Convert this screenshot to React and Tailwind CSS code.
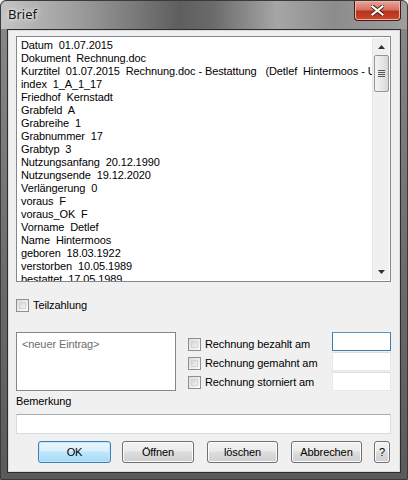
import React from 'react';

const rows = [
  ['Datum', '01.07.2015'],
  ['Dokument', 'Rechnung.doc'],
  ['Kurztitel', '01.07.2015  Rechnung.doc - Bestattung   (Detlef  Hintermoos - Urnengrab)'],
  ['index', '1_A_1_17'],
  ['Friedhof', 'Kernstadt'],
  ['Grabfeld', 'A'],
  ['Grabreihe', '1'],
  ['Grabnummer', '17'],
  ['Grabtyp', '3'],
  ['Nutzungsanfang', '20.12.1990'],
  ['Nutzungsende', '19.12.2020'],
  ['Verlängerung', '0'],
  ['voraus', 'F'],
  ['voraus_OK', 'F'],
  ['Vorname', 'Detlef'],
  ['Name', 'Hintermoos'],
  ['geboren', '18.03.1922'],
  ['verstorben', '10.05.1989'],
  ['bestattet', '17.05.1989'],
];

const Check = () => (
  <span className="w-[13px] h-[13px] border border-[#8f8f8f] bg-[linear-gradient(135deg,#dcdcdc,#fbfbfb)] p-[2px] shrink-0">
    <span className="block w-full h-full border border-[#d4d4d4] bg-[linear-gradient(135deg,#d6d6d6,#f4f4f4)]" />
  </span>
);

const Btn = ({ children, def, className }) => (
  <button
    className={
      'h-[22px] rounded-[3px] border text-[11px] text-black flex items-center justify-center ' +
      (def
        ? 'border-[#3c7fb1] bg-[linear-gradient(#eaf6fd_0%,#d9f0fc_45%,#bee6fd_50%,#a7d9f5_100%)] shadow-[inset_0_0_0_1px_#c2e6f8] '
        : 'border-[#707070] bg-[linear-gradient(#f2f2f2_0%,#ebebeb_45%,#dddddd_50%,#cfcfcf_100%)] shadow-[inset_0_0_0_1px_#fcfcfc] ') +
      className
    }
  >
    {children}
  </button>
);

export default function App() {
  return (
    <div className="w-[408px] h-[480px] bg-[#f0f0f0] font-['Liberation_Sans',Arial,sans-serif]">
      <div className="w-[408px] h-[480px] flex flex-col rounded-t-[6px] border border-[#3a3a3a] bg-[linear-gradient(180deg,#8a8a8a_0%,#6a6a6a_60%,#5a5a5a_100%)]">
        {/* title bar */}
        <div className="h-[28px] shrink-0 flex items-start justify-between rounded-t-[6px] bg-[linear-gradient(90deg,#c4c4c4_0%,#9a9a9a_20%,#5e5e5e_44%,#6a6a6a_52%,#a6a6a6_68%,#8c8c8c_82%,#9e9e9e_100%)]">
          <span className="mt-[4px] ml-[7px] text-[13px] text-[#141414] font-['Noto_Sans',sans-serif] [text-shadow:0_0_6px_#e8e8e8,0_0_3px_#fff]">
            Brief
          </span>
          <div className="mr-[6px] mt-0 w-[47px] h-[20px] rounded-b-[4px] border border-t-0 border-[#4a1a12] bg-[linear-gradient(180deg,#e8a596_0%,#d47463_45%,#b8331c_55%,#c9492e_100%)] shadow-[inset_0_0_0_1px_#f1b3a6] flex items-center justify-center">
            <svg width="13" height="11" viewBox="0 0 13 11">
              <path d="M1.5 1.5 L11.5 9.5 M11.5 1.5 L1.5 9.5" stroke="#4a1a12" strokeWidth="4" strokeLinecap="square" />
              <path d="M1.5 1.5 L11.5 9.5 M11.5 1.5 L1.5 9.5" stroke="#ffffff" strokeWidth="2.2" strokeLinecap="square" />
            </svg>
          </div>
        </div>

        {/* client area */}
        <div className="flex-1 mx-[6px] mb-[6px] border border-[#2c2c2c] bg-[#f0f0f0] shadow-[inset_0_0_0_1px_#dadada] flex flex-col pl-[8px] pr-[9px] pt-[6px] text-[11px] tracking-[-0.1px] text-black">
          {/* list */}
          <div className="h-[246px] border border-[#828790] bg-white flex">
            <div className="flex-1 overflow-hidden pl-[4px] pt-[2px]">
              {rows.map(([k, v]) => (
                <div key={k} className="h-[13px] leading-[13px] whitespace-pre">
                  {k}  {v}
                </div>
              ))}
            </div>
            <div className="w-[17px] my-[1px] mr-[1px] bg-[#f0f0f0] border-l border-[#e6e6e6] flex flex-col items-center">
              <div className="h-[17px] flex items-center justify-center">
                <svg width="7" height="4" viewBox="0 0 7 4"><path d="M3.5 0 L7 4 L0 4 Z" fill="#333" /></svg>
              </div>
              <div className="w-[15px] h-[37px] rounded-[2px] border border-[#959595] bg-[linear-gradient(90deg,#f3f3f3,#e8e8e8_50%,#d6d6d6)] flex flex-col items-center justify-center gap-[1px]">
                <span className="w-[7px] h-[1px] bg-[#555]" />
                <span className="w-[7px] h-[1px] bg-[#555]" />
                <span className="w-[7px] h-[1px] bg-[#555]" />
                <span className="w-[7px] h-[1px] bg-[#555]" />
              </div>
              <div className="flex-1" />
              <div className="h-[17px] flex items-center justify-center">
                <svg width="7" height="4" viewBox="0 0 7 4"><path d="M0 0 L7 0 L3.5 4 Z" fill="#333" /></svg>
              </div>
            </div>
          </div>

          {/* Teilzahlung */}
          <div className="mt-[16px] h-[14px] flex items-center gap-[4px]">
            <Check />
            <span>Teilzahlung</span>
          </div>

          {/* entries and checks */}
          <div className="mt-[20px] flex">
            <div className="w-[160px] h-[59px] border border-[#828790] bg-white px-[5px] pt-[3px] text-[#6d6d6d]">
              &lt;neuer Eintrag&gt;
            </div>
            <div className="ml-[12px] flex flex-col pt-[6px] gap-[6px]">
              <label className="h-[13px] flex items-center gap-[4px]"><Check /><span>Rechnung bezahlt am</span></label>
              <label className="h-[13px] flex items-center gap-[4px]"><Check /><span>Rechnung gemahnt am</span></label>
              <label className="h-[13px] flex items-center gap-[4px]"><Check /><span>Rechnung storniert am</span></label>
            </div>
            <div className="ml-auto w-[59px] flex flex-col gap-[1px]">
              <div className="h-[19px] border border-[#3d7bad] border-t-[#5794bf] bg-white" />
              <div className="h-[19px] border border-[#e3e9ef] border-t-[#d7dee6] bg-white" />
              <div className="h-[19px] border border-[#e3e9ef] border-t-[#d7dee6] bg-white" />
            </div>
          </div>

          {/* Bemerkung */}
          <div className="mt-[3px] h-[14px] leading-[14px]">Bemerkung</div>
          <div className="mt-[6px] h-[20px] border border-[#d5dbe2] border-t-[#abadb3] bg-white" />

          {/* buttons */}
          <div className="mt-[7px] flex items-center">
            <Btn def className="ml-[22px] w-[73px]">OK</Btn>
            <Btn className="ml-[11px] w-[72px]">Öffnen</Btn>
            <Btn className="ml-[13px] w-[71px]">löschen</Btn>
            <Btn className="ml-[13px] w-[71px]">Abbrechen</Btn>
            <Btn className="ml-[12px] w-[16px]">?</Btn>
          </div>
        </div>
      </div>
    </div>
  );
}
